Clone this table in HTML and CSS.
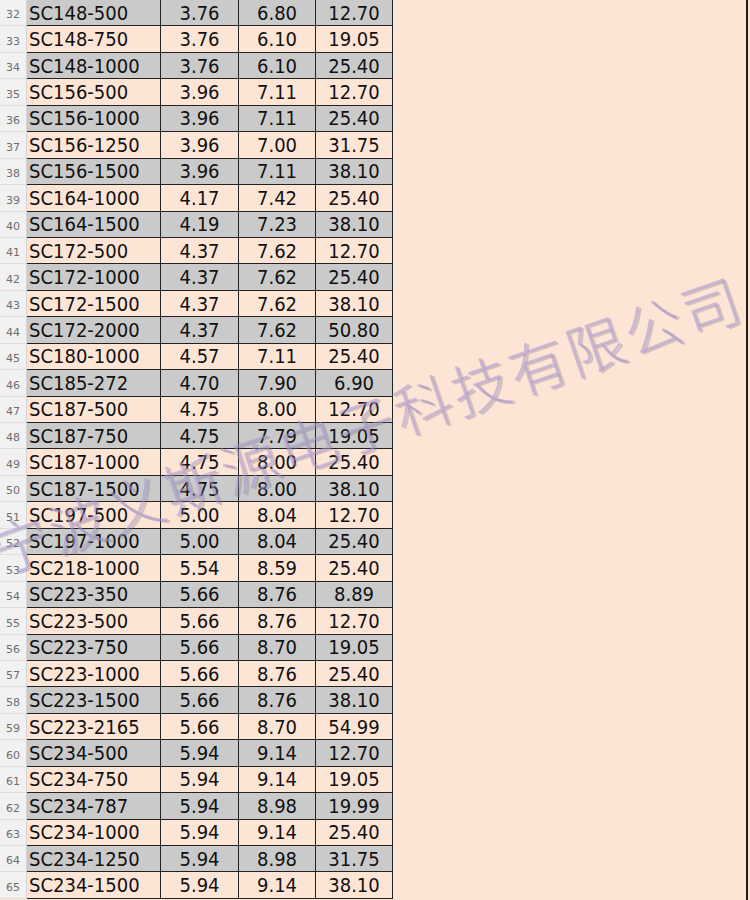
FILE: index.html
```html
<!DOCTYPE html>
<html lang="zh">
<head>
<meta charset="utf-8">
<title>Sheet</title>
<link rel="stylesheet" href="styles.css">
</head>
<body>
<div class="page">
  <div class="sheet">
    <div class="row even"><div class="rn">32</div><div class="c a">SC148-500</div><div class="c">3.76</div><div class="c">6.80</div><div class="c">12.70</div></div>
    <div class="row odd"><div class="rn">33</div><div class="c a">SC148-750</div><div class="c">3.76</div><div class="c">6.10</div><div class="c">19.05</div></div>
    <div class="row even"><div class="rn">34</div><div class="c a">SC148-1000</div><div class="c">3.76</div><div class="c">6.10</div><div class="c">25.40</div></div>
    <div class="row odd"><div class="rn">35</div><div class="c a">SC156-500</div><div class="c">3.96</div><div class="c">7.11</div><div class="c">12.70</div></div>
    <div class="row even"><div class="rn">36</div><div class="c a">SC156-1000</div><div class="c">3.96</div><div class="c">7.11</div><div class="c">25.40</div></div>
    <div class="row odd"><div class="rn">37</div><div class="c a">SC156-1250</div><div class="c">3.96</div><div class="c">7.00</div><div class="c">31.75</div></div>
    <div class="row even"><div class="rn">38</div><div class="c a">SC156-1500</div><div class="c">3.96</div><div class="c">7.11</div><div class="c">38.10</div></div>
    <div class="row odd"><div class="rn">39</div><div class="c a">SC164-1000</div><div class="c">4.17</div><div class="c">7.42</div><div class="c">25.40</div></div>
    <div class="row even"><div class="rn">40</div><div class="c a">SC164-1500</div><div class="c">4.19</div><div class="c">7.23</div><div class="c">38.10</div></div>
    <div class="row odd"><div class="rn">41</div><div class="c a">SC172-500</div><div class="c">4.37</div><div class="c">7.62</div><div class="c">12.70</div></div>
    <div class="row even"><div class="rn">42</div><div class="c a">SC172-1000</div><div class="c">4.37</div><div class="c">7.62</div><div class="c">25.40</div></div>
    <div class="row odd"><div class="rn">43</div><div class="c a">SC172-1500</div><div class="c">4.37</div><div class="c">7.62</div><div class="c">38.10</div></div>
    <div class="row even"><div class="rn">44</div><div class="c a">SC172-2000</div><div class="c">4.37</div><div class="c">7.62</div><div class="c">50.80</div></div>
    <div class="row odd"><div class="rn">45</div><div class="c a">SC180-1000</div><div class="c">4.57</div><div class="c">7.11</div><div class="c">25.40</div></div>
    <div class="row even"><div class="rn">46</div><div class="c a">SC185-272</div><div class="c">4.70</div><div class="c">7.90</div><div class="c">6.90</div></div>
    <div class="row odd"><div class="rn">47</div><div class="c a">SC187-500</div><div class="c">4.75</div><div class="c">8.00</div><div class="c">12.70</div></div>
    <div class="row even"><div class="rn">48</div><div class="c a">SC187-750</div><div class="c">4.75</div><div class="c">7.79</div><div class="c">19.05</div></div>
    <div class="row odd"><div class="rn">49</div><div class="c a">SC187-1000</div><div class="c">4.75</div><div class="c">8.00</div><div class="c">25.40</div></div>
    <div class="row even"><div class="rn">50</div><div class="c a">SC187-1500</div><div class="c">4.75</div><div class="c">8.00</div><div class="c">38.10</div></div>
    <div class="row odd"><div class="rn">51</div><div class="c a">SC197-500</div><div class="c">5.00</div><div class="c">8.04</div><div class="c">12.70</div></div>
    <div class="row even"><div class="rn">52</div><div class="c a">SC197-1000</div><div class="c">5.00</div><div class="c">8.04</div><div class="c">25.40</div></div>
    <div class="row odd"><div class="rn">53</div><div class="c a">SC218-1000</div><div class="c">5.54</div><div class="c">8.59</div><div class="c">25.40</div></div>
    <div class="row even"><div class="rn">54</div><div class="c a">SC223-350</div><div class="c">5.66</div><div class="c">8.76</div><div class="c">8.89</div></div>
    <div class="row odd"><div class="rn">55</div><div class="c a">SC223-500</div><div class="c">5.66</div><div class="c">8.76</div><div class="c">12.70</div></div>
    <div class="row even"><div class="rn">56</div><div class="c a">SC223-750</div><div class="c">5.66</div><div class="c">8.70</div><div class="c">19.05</div></div>
    <div class="row odd"><div class="rn">57</div><div class="c a">SC223-1000</div><div class="c">5.66</div><div class="c">8.76</div><div class="c">25.40</div></div>
    <div class="row even"><div class="rn">58</div><div class="c a">SC223-1500</div><div class="c">5.66</div><div class="c">8.76</div><div class="c">38.10</div></div>
    <div class="row odd"><div class="rn">59</div><div class="c a">SC223-2165</div><div class="c">5.66</div><div class="c">8.70</div><div class="c">54.99</div></div>
    <div class="row even"><div class="rn">60</div><div class="c a">SC234-500</div><div class="c">5.94</div><div class="c">9.14</div><div class="c">12.70</div></div>
    <div class="row odd"><div class="rn">61</div><div class="c a">SC234-750</div><div class="c">5.94</div><div class="c">9.14</div><div class="c">19.05</div></div>
    <div class="row even"><div class="rn">62</div><div class="c a">SC234-787</div><div class="c">5.94</div><div class="c">8.98</div><div class="c">19.99</div></div>
    <div class="row odd"><div class="rn">63</div><div class="c a">SC234-1000</div><div class="c">5.94</div><div class="c">9.14</div><div class="c">25.40</div></div>
    <div class="row even"><div class="rn">64</div><div class="c a">SC234-1250</div><div class="c">5.94</div><div class="c">8.98</div><div class="c">31.75</div></div>
    <div class="row odd"><div class="rn">65</div><div class="c a">SC234-1500</div><div class="c">5.94</div><div class="c">9.14</div><div class="c">38.10</div></div>
  </div>
  <div class="blank"></div>
  <div class="watermark">宁波义斯源电子科技有限公司</div>
</div>
</body>
</html>
```

FILE: styles.css
```css
html, body {
  margin: 0;
  padding: 0;
  background: #f6e4d8;
}

.page {
  position: relative;
  display: flex;
  width: 746px;
  height: 900px;
  overflow: hidden;
  border-right: 2px solid #241812;
  background: #fde5d6;
}

.sheet {
  display: flex;
  flex-direction: column;
  width: 393px;
  flex: none;
}

.row {
  display: grid;
  grid-template-columns: 27px 134px 78px 77px 77px;
  height: 26.45px;
  flex: none;
}

.row.even .c { background: #cacaca; }
.row.odd .c { background: #fde5d6; }

.rn {
  box-sizing: border-box;
  background: #f1f1f1;
  border-right: 1px solid #d4d4d4;
  border-bottom: 1px solid #dedede;
  color: #6e6e6e;
  font-family: "DejaVu Sans", sans-serif;
  font-size: 11px;
  display: flex;
  align-items: flex-end;
  justify-content: center;
  padding-bottom: 4px;
}

.c {
  box-sizing: border-box;
  border-right: 1px solid #222;
  border-bottom: 1px solid #222;
  font-family: "DejaVu Sans Condensed", "DejaVu Sans", sans-serif;
  font-stretch: condensed;
  font-size: 20px;
  color: #111;
  display: flex;
  align-items: center;
  justify-content: center;
  white-space: nowrap;
  line-height: 1;
}

.c.a {
  justify-content: flex-start;
  padding-left: 2px;
}

.blank {
  flex: 1;
  background: #fde5d6;
}

.watermark {
  position: absolute;
  left: -8px;
  top: 522px;
  height: 58px;
  line-height: 58px;
  font-family: "Noto Sans CJK SC", sans-serif;
  font-weight: 300;
  font-size: 58px;
  letter-spacing: 2.8px;
  white-space: nowrap;
  color: rgba(168, 150, 212, 0.55);
  text-shadow: 2px 2px 0 rgba(120, 110, 130, 0.3);
  transform-origin: 0 50%;
  transform: rotate(-19deg);
  pointer-events: none;
}
```
